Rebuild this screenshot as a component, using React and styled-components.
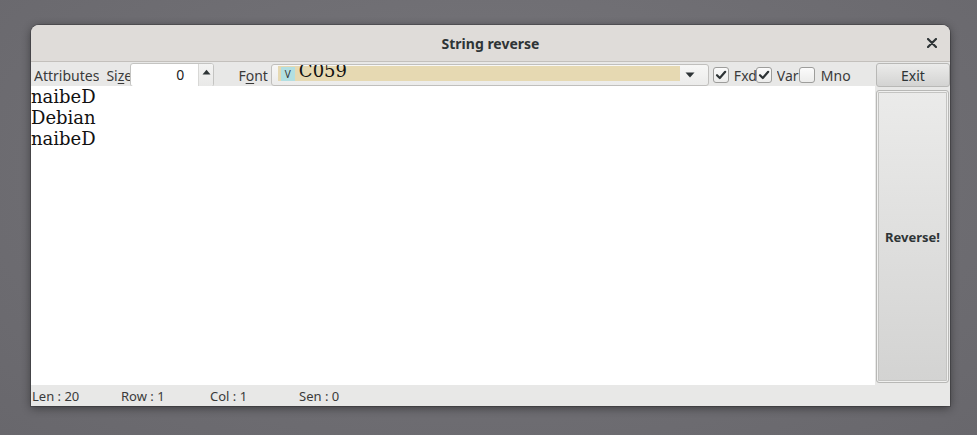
import React from "react";
import styled, { createGlobalStyle } from "styled-components";

const Global = createGlobalStyle`
  html, body { margin: 0; padding: 0; }
  body {
    width: 977px; height: 435px; overflow: hidden;
    background: radial-gradient(ellipse at 50% 40%, #78777c 0%, #6e6d72 60%, #68676c 100%);
    font-family: "Noto Sans", "Open Sans", sans-serif;
  }
`;

const Desk = styled.div`
  padding: 25px 27px 0 31px;
`;

const Window = styled.div`
  width: 919px;
  height: 381px;
  display: flex;
  flex-direction: column;
  border-radius: 8px 8px 0 0;
  box-shadow: 0 2px 10px rgba(0,0,0,0.45), 0 0 0 1px rgba(0,0,0,0.18);
  overflow: hidden;
  background: #e8e8e7;
`;

const TitleBar = styled.div`
  height: 36px;
  flex: none;
  background: #dfdcd9;
  border-bottom: 1px solid #c3c0bc;
  display: flex;
  align-items: center;
  justify-content: center;
  position: relative;
  font-weight: 700;
  font-size: 14px;
  color: #2e3436;
`;

const Close = styled.span`
  position: absolute;
  right: 10px;
  top: 10px;
  width: 16px;
  height: 16px;
  display: flex;
  align-items: center;
  justify-content: center;
`;

const Body = styled.div`
  flex: 1;
  display: flex;
  min-height: 0;
`;

const Main = styled.div`
  width: 844px;
  display: flex;
  flex-direction: column;
`;

const Toolbar = styled.div`
  height: 26px;
  display: flex;
  align-items: center;
  font-size: 14px;
  color: #3a3a3a;
  white-space: nowrap;
`;

const Label = styled.span`
  margin-left: ${p => p.ml || 0}px;
  width: ${p => (p.w ? p.w + "px" : "auto")};
  overflow: hidden;
  flex: none;
  u { text-decoration: underline; text-underline-offset: 2px; }
`;

const Spin = styled.div`
  display: flex;
  height: 22px;
  width: 82px;
  border: 1px solid #c4c4c2;
  border-radius: 3px;
  background: #fff;
  flex: none;
  overflow: hidden;
`;

const SpinInput = styled.div`
  flex: 1;
  text-align: right;
  padding-right: 14px;
  line-height: 21px;
  font-size: 14px;
  color: #222;
`;

const SpinBtn = styled.div`
  width: 15px;
  border-left: 1px solid #d8d8d6;
  background: linear-gradient(#f4f4f3, #e9e9e8);
  display: flex;
  justify-content: center;
  align-items: flex-start;
  padding-top: 5px;
  box-sizing: border-box;
`;

const Combo = styled.div`
  margin-left: 3px;
  width: 438px;
  height: 22px;
  box-sizing: border-box;
  border: 1px solid #c0bfbd;
  border-radius: 3px;
  background: linear-gradient(#f7f7f6, #ebebea);
  flex: none;
  display: flex;
  align-items: center;
  justify-content: flex-end;
  position: relative;
  overflow: hidden;
`;

const Swatch = styled.div`
  position: absolute;
  left: 6px;
  top: 1px;
  width: 402px;
  height: 15px;
  background: #e6d9b2;
  display: flex;
  align-items: center;
`;

const VBox = styled.span`
  margin-left: 3px;
  width: 14px;
  height: 14px;
  background: #b2dfe2;
  font-size: 10px;
  line-height: 14px;
  text-align: center;
  color: #333;
  flex: none;
`;

const FontName = styled.span`
  margin-left: 4px;
  font-family: "DejaVu Serif", serif;
  font-size: 18px;
  line-height: 15px;
  margin-top: -7px;
  color: #111;
`;

const Arrow = styled.span`
  display: flex;
  margin-right: 13px;
`;

const Check = styled.span`
  margin-left: ${p => p.ml || 0}px;
  width: 14px;
  height: 14px;
  border: 1px solid #9d9d9b;
  border-radius: 3px;
  background: linear-gradient(#fbfbfb, #ececeb);
  display: flex;
  align-items: center;
  justify-content: center;
  flex: none;
`;

const TextArea = styled.div`
  flex: 1;
  background: #fff;
  font-family: "DejaVu Serif", serif;
  font-size: 18px;
  line-height: 21px;
  color: #111;
  padding-top: 0;
  margin-top: -2px;
  position: relative;
`;

const Line = styled.div`
  height: 21px;
`;

const Side = styled.div`
  width: 75px;
  display: flex;
  flex-direction: column;
  padding: 1px 0 1px 1px;
  box-sizing: border-box;
`;

const Button = styled.div`
  box-sizing: border-box;
  height: ${p => (p.h ? p.h + "px" : "auto")};
  flex: ${p => (p.grow ? 1 : "none")};
  margin: ${p => p.m || 0};
  border: 1px solid #b8b8b6;
  border-radius: 3px;
  background: linear-gradient(#ebebea, #d3d3d2);
  display: flex;
  align-items: center;
  justify-content: center;
  font-size: ${p => (p.bold ? 13 : 14)}px;
  font-weight: ${p => (p.bold ? 700 : 400)};
  color: #2e3436;
  box-shadow: ${p => (p.inset ? "inset 0 0 0 1px #f0f0ef, inset 0 0 0 2px #c4c4c2" : "none")};
`;

const Status = styled.div`
  height: 21px;
  flex: none;
  background: #e8e8e7;
  display: flex;
  align-items: center;
  font-size: 13px;
  color: #3a3a3a;
`;

const Field = styled.span`
  width: 88px;
  padding-left: 1px;
  flex: none;
`;

const CheckMark = () => (
  <svg width="12" height="12" viewBox="0 0 12 12">
    <path d="M2 6.2 L4.8 9 L10.2 2.8" fill="none" stroke="#2e3436" strokeWidth="2.2" strokeLinecap="round" strokeLinejoin="round" />
  </svg>
);

export default function App() {
  return (
    <>
      <Global />
      <Desk>
        <Window>
          <TitleBar>
            String reverse
            <Close>
              <svg width="10" height="10" viewBox="0 0 10 10">
                <path d="M1 1 L9 9 M9 1 L1 9" stroke="#2e3436" strokeWidth="2.2" strokeLinecap="round" />
              </svg>
            </Close>
          </TitleBar>
          <Body>
            <Main>
              <Toolbar>
                <Label ml={3}>Attributes</Label>
                <Label ml={7} w={24}>Si<u>z</u>e</Label>
                <Spin>
                  <SpinInput>0</SpinInput>
                  <SpinBtn>
                    <svg width="9" height="6" viewBox="0 0 9 6">
                      <path d="M0.5 5.5 L4.5 0.8 L8.5 5.5 Z" fill="#2e3436" />
                    </svg>
                  </SpinBtn>
                </Spin>
                <Label ml={24}>F<u>o</u>nt</Label>
                <Combo>
                  <Swatch>
                    <VBox>V</VBox>
                    <FontName>C059</FontName>
                  </Swatch>
                  <Arrow>
                    <svg width="10" height="6" viewBox="0 0 10 6">
                      <path d="M0.5 0.5 L9.5 0.5 L5 5.5 Z" fill="#2e3436" />
                    </svg>
                  </Arrow>
                </Combo>
                <Check ml={4}><CheckMark /></Check>
                <Label ml={5} w={22}>Fxd</Label>
                <Check><CheckMark /></Check>
                <Label ml={5} w={22}>Var</Label>
                <Check />
                <Label ml={6}>Mno</Label>
              </Toolbar>
              <TextArea>
                <Line>naibeD</Line>
                <Line>Debian</Line>
                <Line>naibeD</Line>
              </TextArea>
            </Main>
            <Side>
              <Button h={24}>Exit</Button>
              <Button grow bold inset m="3px 1px 1px 0">Reverse!</Button>
            </Side>
          </Body>
          <Status>
            <Field>Len : 20</Field>
            <Field>Row : 1</Field>
            <Field>Col : 1</Field>
            <Field>Sen : 0</Field>
          </Status>
        </Window>
      </Desk>
    </>
  );
}
